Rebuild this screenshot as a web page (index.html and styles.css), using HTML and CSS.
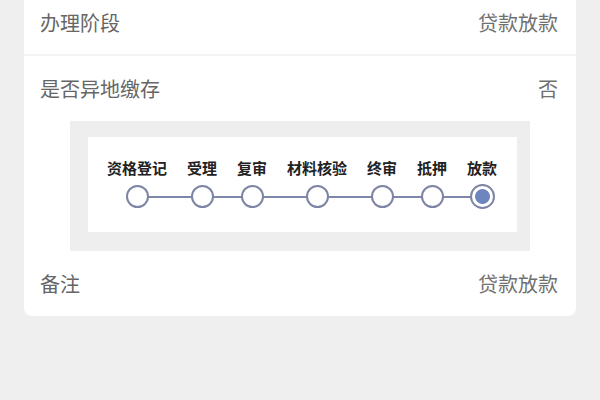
FILE: index.html
```html
<!DOCTYPE html>
<html lang="zh-CN">
<head>
<meta charset="utf-8">
<title>办理详情</title>
<link rel="stylesheet" href="styles.css">
</head>
<body>
<div class="page">
  <div class="card">
    <div class="row">
      <span class="label">办理阶段</span>
      <span class="value">贷款放款</span>
    </div>
    <div class="row row--plain">
      <span class="label">是否异地缴存</span>
      <span class="value">否</span>
    </div>
    <div class="figure">
      <div class="panel">
        <div class="steps">
          <div class="track"></div>
          <div class="step"><span class="step-name">资格登记</span><span class="dot"></span></div>
          <div class="step"><span class="step-name">受理</span><span class="dot"></span></div>
          <div class="step"><span class="step-name">复审</span><span class="dot"></span></div>
          <div class="step"><span class="step-name">材料核验</span><span class="dot"></span></div>
          <div class="step"><span class="step-name">终审</span><span class="dot"></span></div>
          <div class="step"><span class="step-name">抵押</span><span class="dot"></span></div>
          <div class="step"><span class="step-name">放款</span><span class="dot dot--active"></span></div>
        </div>
      </div>
    </div>
    <div class="row row--plain">
      <span class="label">备注</span>
      <span class="value">贷款放款</span>
    </div>
  </div>
</div>
</body>
</html>
```

FILE: styles.css
```css
html, body {
  margin: 0;
  padding: 0;
  background: #efefef;
  font-family: "Noto Sans CJK SC", "Noto Sans", sans-serif;
}

.page {
  padding: 0 24px;
  margin-top: -10px;
}

.card {
  background: #ffffff;
  border-radius: 0 0 8px 8px;
  overflow: hidden;
}

.row {
  height: 64px;
  display: flex;
  align-items: center;
  justify-content: space-between;
  padding: 0 18px 0 16px;
  border-bottom: 2px solid #f3f3f3;
  font-size: 20px;
  color: #666666;
}

.row--plain {
  border-bottom: none;
  height: 65px;
}

.value {
  color: #707070;
}

.figure {
  margin: 0 46px;
  background: #eeeeee;
  padding: 16px 13px 19px 18px;
  height: 95px;
}

.panel {
  background: #ffffff;
  height: 95px;
  box-sizing: border-box;
  padding: 23px 19px 0 19px;
}

.steps {
  position: relative;
  display: flex;
  gap: 20px;
}

.track {
  position: absolute;
  left: 30px;
  right: 15px;
  top: 36px;
  height: 2px;
  background: #7f87a8;
}

.step {
  position: relative;
  display: flex;
  flex-direction: column;
  align-items: center;
}

.step-name {
  font-size: 15px;
  line-height: 16px;
  font-weight: 700;
  color: #222222;
  white-space: nowrap;
}

.dot {
  margin-top: 9px;
  width: 23px;
  height: 23px;
  box-sizing: border-box;
  border: 2px solid #7d84a4;
  border-radius: 50%;
  background: #ffffff;
}

.dot--active {
  margin-top: 8px;
  width: 25px;
  height: 25px;
  background: radial-gradient(circle, #6e85bf 0 7px, #ffffff 7.8px);
}
```
